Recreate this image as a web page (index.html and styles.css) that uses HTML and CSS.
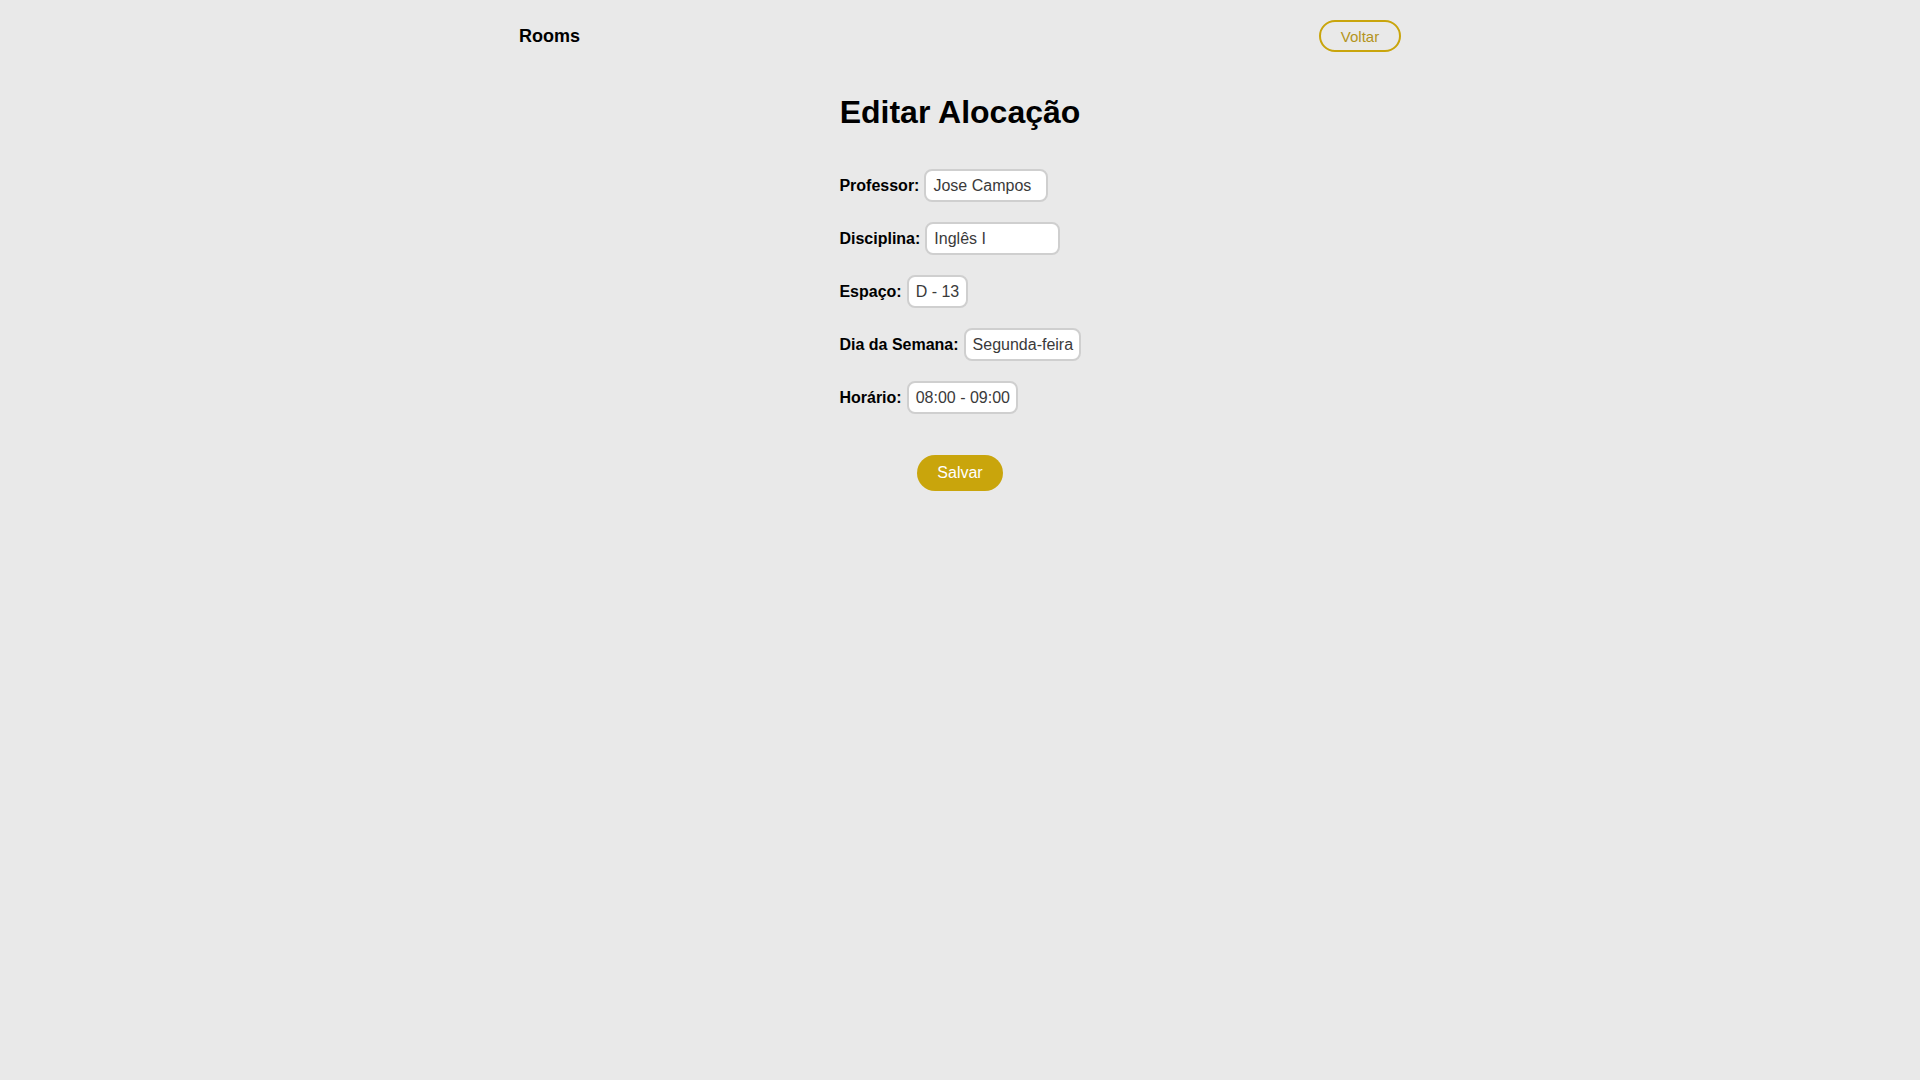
FILE: index.html
```html
<!DOCTYPE html>
<html lang="pt-BR">
<head>
<meta charset="utf-8">
<title>Editar Alocação</title>
<link rel="stylesheet" href="styles.css">
</head>
<body>
<header class="topbar">
  <span class="brand">Rooms</span>
  <button class="btn-back" type="button">Voltar</button>
</header>
<main class="page">
  <h1 class="title">Editar Alocação</h1>
  <form class="form">
    <div class="row">
      <label class="label">Professor:</label>
      <div class="field w-prof">Jose Campos</div>
    </div>
    <div class="row">
      <label class="label">Disciplina:</label>
      <div class="field w-disc">Inglês I</div>
    </div>
    <div class="row">
      <label class="label">Espaço:</label>
      <div class="field w-esp">D - 13</div>
    </div>
    <div class="row">
      <label class="label">Dia da Semana:</label>
      <div class="field w-dia">Segunda-feira</div>
    </div>
    <div class="row">
      <label class="label">Horário:</label>
      <div class="field w-hor">08:00 - 09:00</div>
    </div>
    <button class="btn-save" type="button">Salvar</button>
  </form>
</main>
</body>
</html>
```
FILE: styles.css
```css
* { box-sizing: border-box; }
html, body { margin: 0; padding: 0; }
body {
  background: #e9e9e9;
  font-family: "Liberation Sans", Arial, sans-serif;
  color: #000;
  min-height: 1080px;
}
.topbar {
  width: 882px;
  margin: 0 auto;
  padding-top: 20px;
  display: flex;
  justify-content: space-between;
  align-items: center;
}
.brand {
  font-size: 18px;
  font-weight: bold;
  line-height: 32px;
}
.btn-back {
  height: 32px;
  width: 82px;
  border: 2px solid #c9a50c;
  border-radius: 16px;
  background: transparent;
  color: #b39420;
  font-family: inherit;
  font-size: 15px;
  padding: 0;
  cursor: pointer;
}
.page {
  display: flex;
  flex-direction: column;
  align-items: center;
}
.title {
  margin: 42px 0 0;
  font-size: 32px;
  font-weight: bold;
  line-height: 37px;
}
.form {
  margin-top: 38px;
  display: flex;
  flex-direction: column;
  width: fit-content;
}
.row {
  display: flex;
  align-items: center;
  gap: 5px;
  margin-bottom: 20px;
}
.label {
  font-size: 16px;
  font-weight: bold;
}
.field {
  height: 33px;
  padding: 0 7px;
  border: 2px solid #cfcfcf;
  border-radius: 8px;
  background: #fff;
  font-size: 16px;
  line-height: 29px;
  color: #3a3a3a;
  white-space: nowrap;
  overflow: hidden;
}
.w-prof { width: 124px; }
.w-disc { width: 135px; }
.w-esp { width: 61px; }
.w-dia { width: 117px; }
.w-hor { width: 111px; }
.btn-save {
  align-self: center;
  margin-top: 21px;
  height: 36px;
  padding: 0 20px;
  border: none;
  border-radius: 18px;
  background: #c9a50c;
  color: #fff;
  font-family: inherit;
  font-size: 16px;
  cursor: pointer;
}
```
